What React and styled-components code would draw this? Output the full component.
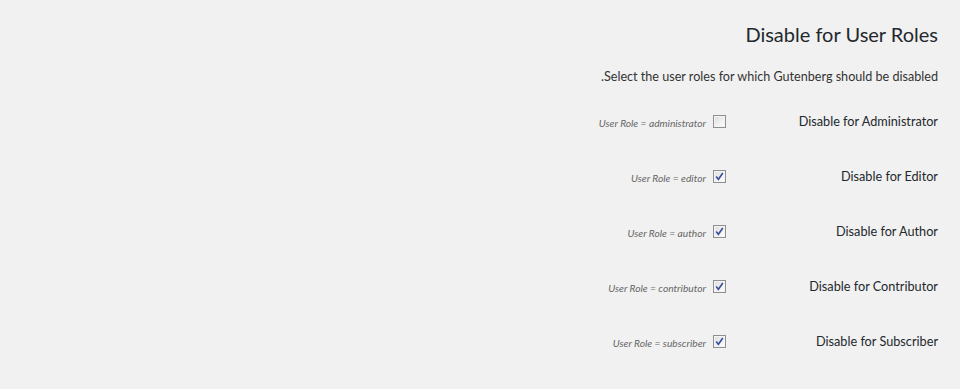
import React from "react";
import styled, { createGlobalStyle } from "styled-components";

const Global = createGlobalStyle`
  html, body { margin: 0; padding: 0; background: #f1f1f1; }
  body { font-family: Lato, "Noto Sans", sans-serif; color: #23282d; }
`;

const Page = styled.div`
  direction: rtl;
  width: 960px;
  height: 389px;
  box-sizing: border-box;
  padding: 0 22px 0 0;
  background: #f1f1f1;
  overflow: hidden;
`;

const Title = styled.h1`
  margin: 0;
  padding: 20px 0 0;
  font-size: 20px;
  line-height: 29px;
  font-weight: 400;
  color: #23282d;
`;

const Desc = styled.p`
  margin: 19px 0 0;
  font-size: 12.6px;
  line-height: 18px;
  color: #333;
`;

const Table = styled.div`
  display: flex;
  flex-direction: column;
  margin-top: 8px;
`;

const Row = styled.div`
  display: flex;
  align-items: center;
  height: 55px;
`;

const Label = styled.div`
  width: 212px;
  flex: none;
  font-size: 12.7px;
  color: #23282d;
  margin-top: -2px;
`;

const Box = styled.span`
  width: 13px;
  height: 13px;
  box-sizing: border-box;
  border: 1px solid #8e8f8f;
  background: linear-gradient(135deg, #dcdcdc 0%, #f2f2f2 60%, #ffffff 100%);
  box-shadow: inset 0 0 0 1px #f4f4f4;
  display: flex;
  align-items: center;
  justify-content: center;
  flex: none;
`;

const Hint = styled.span`
  font-size: 10.2px;
  font-style: italic;
  color: #666;
  margin-right: 7px;
  margin-top: 2px;
`;

function Check({ checked }) {
  return (
    <Box>
      {checked && (
        <svg width="9" height="9" viewBox="0 0 9 9">
          <path d="M1.2 4.6 L3.4 7.3 L7.8 1" fill="none" stroke="#3b4f9c" strokeWidth="1.6" />
        </svg>
      )}
    </Box>
  );
}

const roles = [
  ["Administrator", "administrator", false],
  ["Editor", "editor", true],
  ["Author", "author", true],
  ["Contributor", "contributor", true],
  ["Subscriber", "subscriber", true],
];

export default function App() {
  return (
    <Page>
      <Global />
      <Title>Disable for User Roles</Title>
      <Desc>Select the user roles for which Gutenberg should be disabled.</Desc>
      <Table>
        {roles.map(([name, key, checked]) => (
          <Row key={key}>
            <Label>Disable for {name}</Label>
            <Check checked={checked} />
            <Hint>User Role = {key}</Hint>
          </Row>
        ))}
      </Table>
    </Page>
  );
}
